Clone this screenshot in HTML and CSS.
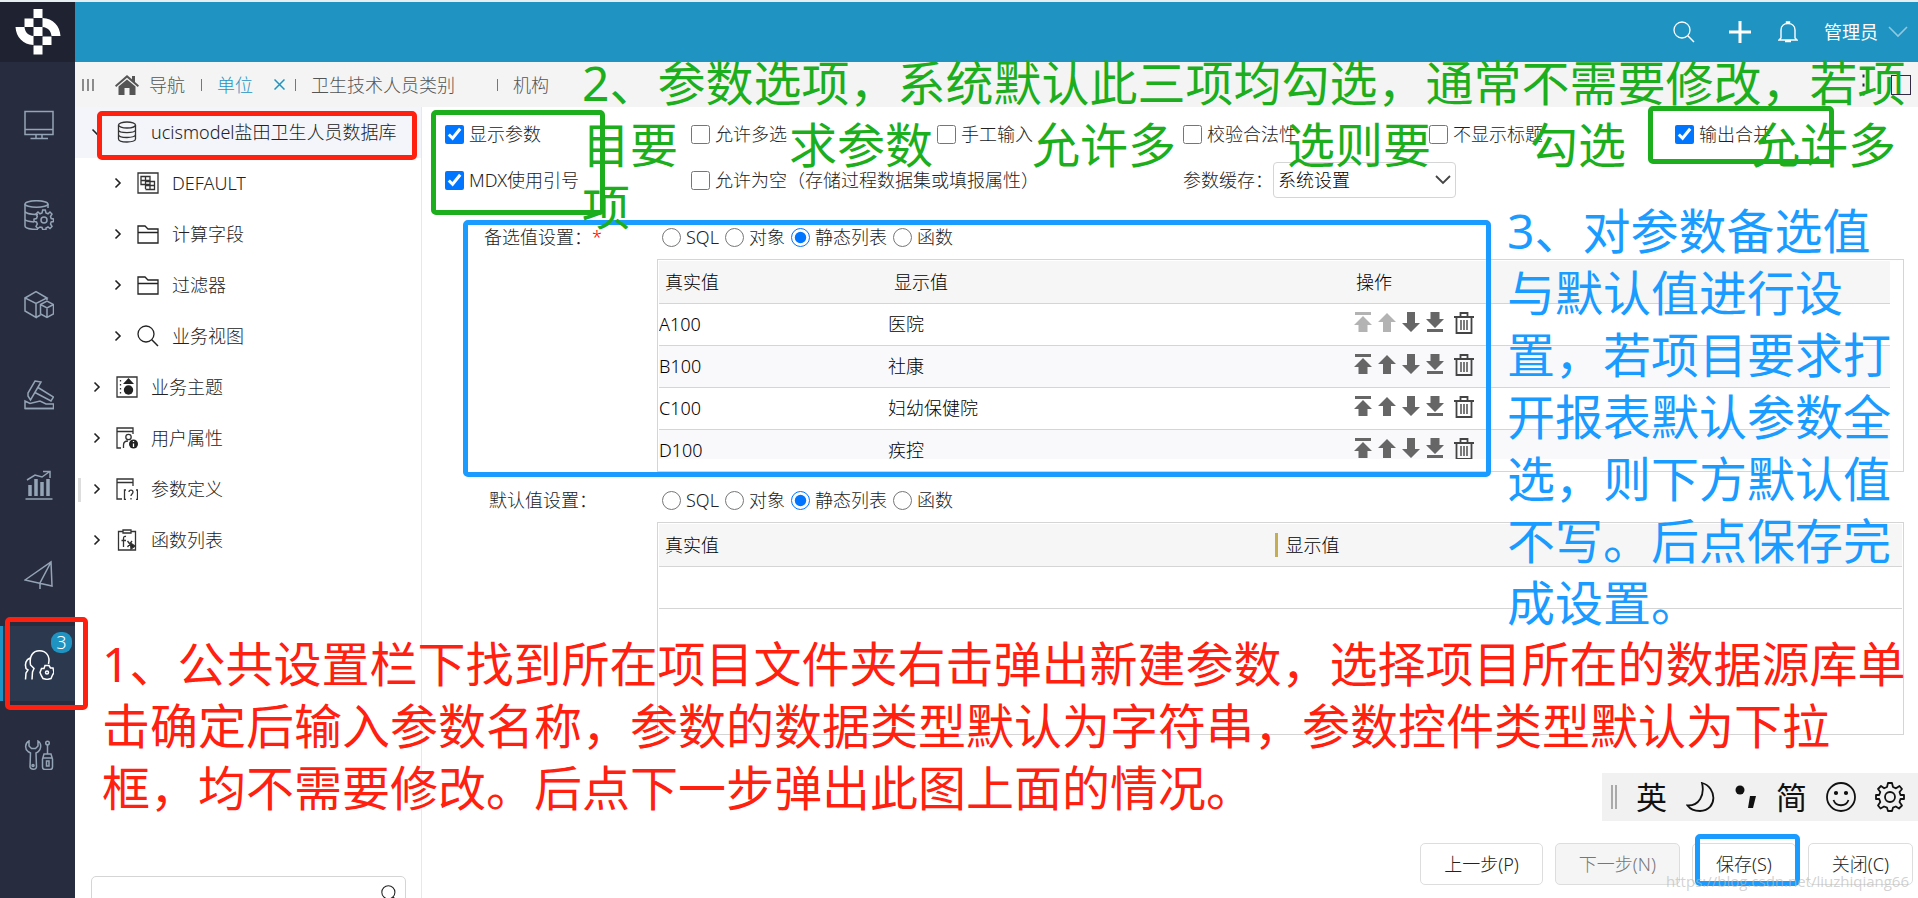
FILE: index.html
```html
<!DOCTYPE html>
<html lang="zh-CN">
<head>
<meta charset="utf-8">
<title>参数定义</title>
<link rel="stylesheet" href="styles.css">
</head>
<body>
<svg class="defs" aria-hidden="true">
  <symbol id="up" viewBox="0 0 20 20"><path d="M10 1L19 10H14V20H6V10H1Z"/></symbol>
  <symbol id="down" viewBox="0 0 20 20"><path d="M10 20L1 11H6V0H14V11H19Z"/></symbol>
  <symbol id="top" viewBox="0 0 20 20"><path d="M2 0H18V3H2ZM10 4L19 13H14.500V20H5.500V13H1Z"/></symbol>
  <symbol id="bottom" viewBox="0 0 20 20"><path d="M2 17H18V20H2ZM10 16L1 7H5.500V0H14.500V7H19Z"/></symbol>
  <symbol id="trash" viewBox="0 0 20 22"><path d="M0 5H20M6.500 4.500V1H13.500V4.500M2.500 5.500V21H17.500V5.500" fill="none" stroke="currentColor" stroke-width="1.800"/><path d="M7 8V18M10 8V18M13 8V18" fill="none" stroke="currentColor" stroke-width="1.400"/></symbol>
  <symbol id="chev" viewBox="0 0 8 12"><path d="M1.500 1.500L6 6L1.500 10.500" fill="none" stroke="currentColor" stroke-width="1.600"/></symbol>
  <symbol id="folder" viewBox="0 0 22 22"><path d="M1 20V3H8L11 6H21V20ZM1 9.500H21" fill="none" stroke="currentColor" stroke-width="1.300"/></symbol>
  <symbol id="search" viewBox="0 0 22 22"><circle cx="9" cy="9" r="8" fill="none" stroke="currentColor" stroke-width="1.300"/><path d="M14.800 14.800L21 21" stroke="currentColor" stroke-width="1.500"/></symbol>
  <symbol id="gear" viewBox="0 0 30 30"><path d="M13 1H17L18 5L21 6.300L24.500 4L27 7L24.500 10L25.500 13H29V17H25.500L24.500 20L27 23.500L24 26.500L20.800 24.500L18 25.700L17 29H13L12 25.700L9 24.500L5.500 26.500L3 23.500L5.300 20L4.200 17H1V13H4.200L5.300 10L3 7L6 4L9.200 6.300L12 5Z" fill="none" stroke="currentColor" stroke-width="1.800" stroke-linejoin="round"/><circle cx="15" cy="15" r="5" fill="none" stroke="currentColor" stroke-width="1.800"/></symbol>
</svg>
<div class="app">
  <nav class="rail">
    <div class="logo">
      <svg width="46" height="46" viewBox="0 0 46 46" fill="#fff"><path d="M18.500 0H27.500V9H18.500ZM9.500 9.500H18.500V18H9.500ZM18.500 18H27.500V27H18.500ZM27.500 27.500H36.500V36H27.500ZM18.500 36.500H27.500V45.500H18.500ZM27.500 9C38 9.500 45 17 45.500 27H36.500C36 22 33 18.500 27.500 18ZM18.500 36C8 35.500 1 28 .5 18H9.500C10 23 13 26.500 18.500 27Z"/></svg>
    </div>
    <a class="rail-item" href="#" aria-label="工作台"><svg viewBox="0 0 30 30"><path d="M1 1.500H29V24.500H1ZM1 19.500H29M12 25V28M18 25V28M6.500 28.500H24"/></svg></a>
    <a class="rail-item" href="#" aria-label="数据源"><svg viewBox="0 0 30 30"><ellipse cx="12.500" cy="4" rx="11.500" ry="3.300"/><path d="M1 4V26C1 28 6 29.500 14 29.500M24 4V8M1 11C1 13 6 14.500 14 14.500M1 19C1 20.500 4 21.500 10 22"/><path d="M18.700 10H21.300L22 13L24 13.800L26 12L28 14L26.500 16.500L27.200 18.500L29.500 19V21.500L27.200 22L26.500 24L28 26.500L26 28.500L24 27L22 28V29.500H18.700L18 27.500L16 27L13.800 28.500L12 26.500L13.300 24L12.500 22L10 21.500V19L12.500 18.500L13.300 16.300L12 14L14 12L16 13.800L18 13Z"/><circle cx="20" cy="20" r="3"/></svg></a>
    <a class="rail-item" href="#" aria-label="数据模型"><svg viewBox="0 0 30 30"><path d="M1 8L12 1.500L23 8L12 13.500ZM1 8V21L12 27.500V13.500M12 27.500L16.500 25M23 8V10"/><path d="M16.500 14.500L23 11L29.500 14.500V24L23 27.500L16.500 24ZM16.500 14.500L23 18L29.500 14.500M23 18V27.500"/></svg></a>
    <a class="rail-item" href="#" aria-label="数据挖掘"><svg viewBox="0 0 30 30"><path d="M11 1L17 2L6.500 20L4 16V13ZM14 7.500L29.500 17L27 21L11 12.500"/><path d="M1 28.500V21L6 23.500L16 21L22 24H29.500V28.500Z"/><path d="M1 28.500H30"/></svg></a>
    <a class="rail-item" href="#" aria-label="分析展现"><svg viewBox="0 0 30 30"><path d="M1.500 29H28.500M3 10L11 5L18 7L25 2M19 1.500H26V8"/><path d="M6 15V26M12 9V26M18 12V26M24 9V26" stroke-width="3.500"/></svg></a>
    <a class="rail-item" href="#" aria-label="数据发布"><svg viewBox="0 0 30 30"><path d="M1 20L27 2L28 26ZM27 2L16 23V29"/></svg></a>
    <a class="rail-item active" href="#" aria-label="公共设置"><svg viewBox="0 0 30 30"><path d="M8 29.500L8.500 22L10 18.500L6.500 15C5 6 9 .8 15.500 .8C22 .8 26.500 6 24.500 14M6 8C2 9.500 .5 14 2 18.500L4 20L2 23L1.500 29.500"/><path d="M21 15.500H25L26.500 18H29L30 22.500L28.500 25L27 28.500L23 29.500L19 28.500L17.500 26L16 22.500L17.500 18.500H20Z"/><circle cx="23" cy="22.500" r="1.500"/></svg><span class="badge">3</span></a>
    <a class="rail-item" href="#" aria-label="系统运维"><svg viewBox="0 0 30 30"><path d="M5 1C1 3 .5 9 4 11.500L6.500 13L6 27C7 30 12 30 12.500 27L12 13C17 11 18.500 4 14 1V6L11.500 8.500H7.500L5 6Z"/><circle cx="9" cy="25.500" r="1"/><circle cx="23.500" cy="3" r="1.800"/><path d="M23.500 5V14M20 14H27L28.500 19V27C28.500 29 27 29.500 26 29.500H21C19 29.500 18.500 28 18.500 27V19ZM18.500 18H28.500M22.500 21H25V26H22.500Z"/></svg></a>
  </nav>

  <div class="main">
    <header class="topbar">
      <button class="ghost" aria-label="搜索"><svg width="22" height="22"><use href="#search"/></svg></button>
      <button class="ghost" aria-label="新建"><svg width="22" height="22" viewBox="0 0 22 22"><path d="M0 11H22M11 0V22" stroke="currentColor" stroke-width="3"/></svg></button>
      <button class="ghost bell" aria-label="通知"><svg width="20" height="22" viewBox="0 0 20 22" fill="none" stroke="currentColor" stroke-width="1.400"><path d="M3 17V9C3 5 6 2.500 10 2.500S17 5 17 9V17L19 19H1ZM7 20.500H13M8.500 2.500V1H11.500V2.500"/></svg></button>
      <button class="ghost user">管理员<svg width="20" height="12" viewBox="0 0 20 12"><path d="M1 1L10 10L19 1" fill="none" stroke="#8fc9e0" stroke-width="1.600"/></svg></button>
    </header>

    <div class="tabs">
      <svg class="grip" width="12" height="12" viewBox="0 0 12 12"><path d="M1 0V12M6 0V12M11 0V12" stroke="#555" stroke-width="1.300"/></svg>
      <a class="tab home" href="#"><svg width="24" height="20" viewBox="0 0 24 20"><path d="M12 0L17 4.300V1H20V7L24 10.500L22.800 12L12 2.800L1.200 12L0 10.500ZM12 4.500L20.500 11.500V20H14.500V13H9.500V20H3.500V11.500Z" fill="#555"/></svg>导航</a>
      <a class="tab current" href="#">单位</a>
      <button class="close" aria-label="关闭标签"><svg width="11" height="11" viewBox="0 0 11 11"><path d="M.5 .5L10.500 10.500M10.500 .5L.5 10.500" stroke="#1f93c1" stroke-width="1.500"/></svg></button>
      <a class="tab cat" href="#">卫生技术人员类别</a>
      <a class="tab org" href="#">机构</a>
      <svg class="tab-tools" width="50" height="22" viewBox="0 0 50 22"><path d="M1.500 2H3.500M1.500 11H3.500M1.500 20H3.500" stroke="#332b45" stroke-width="3"/><rect x="30.500" y="1.500" width="19" height="19" fill="none" stroke="#332b45"/></svg>
    </div>

    <div class="body">
      <aside class="side">
        <ul class="tree">
          <li class="node selected"><svg class="chev open"><use href="#chev"/></svg><svg class="ico" viewBox="0 0 22 22"><ellipse cx="11" cy="4" rx="8.500" ry="3"/><path d="M2.500 4V18C2.500 22 19.500 22 19.500 18V4M2.500 9C2.500 12.500 19.500 12.500 19.500 9M2.500 13.500C2.500 17.500 19.500 17.500 19.500 13.500"/></svg>ucismodel盐田卫生人员数据库</li>
          <li class="node sub"><svg class="chev"><use href="#chev"/></svg><svg class="ico" viewBox="0 0 22 22"><path d="M1 1H21V21H1ZM4 4.500H13V12.500H4ZM8.500 4.500V17M4 8.500H13M8.500 9.500H17.500V17.500H8.500M13 9.500V17.500M8.500 13.500H17.500"/></svg>DEFAULT</li>
          <li class="node sub"><svg class="chev"><use href="#chev"/></svg><svg class="ico"><use href="#folder"/></svg>计算字段</li>
          <li class="node sub"><svg class="chev"><use href="#chev"/></svg><svg class="ico"><use href="#folder"/></svg>过滤器</li>
          <li class="node sub"><svg class="chev"><use href="#chev"/></svg><svg class="ico"><use href="#search"/></svg>业务视图</li>
          <li class="node"><svg class="chev"><use href="#chev"/></svg><svg class="ico" viewBox="0 0 22 22"><path d="M1 1H21V21H1Z"/><path d="M4.500 4V19" stroke-dasharray="1.500 2.500"/><path d="M12.500 2L18 8H7Z" fill="#222" stroke="none"/><circle cx="12.500" cy="14" r="4.700" fill="#222" stroke="none"/></svg>业务主题</li>
          <li class="node"><svg class="chev"><use href="#chev"/></svg><svg class="ico" viewBox="0 0 22 22"><path d="M17 7V1H1V21H5M1 4.500H17M7.500 21V18C7.500 15.500 9.500 14 12 14"/><circle cx="12.500" cy="10" r="2.700"/><circle cx="17.500" cy="17" r="4.500" fill="#222" stroke="none"/><path d="M17.500 14V15M17.500 16.500V20" stroke="#fff"/></svg>用户属性</li>
          <li class="node"><svg class="chev"><use href="#chev"/></svg><svg class="ico" viewBox="0 0 22 22"><path d="M17 8V1H1V21H6M1 4.500H17M10 12H8.500V21.500H10M20 12H21.500V21.500H20M13 14C13 11.500 17 11.500 17 14C17 16 15 16 15 18M15 20V21.500"/></svg>参数定义</li>
          <li class="node"><svg class="chev"><use href="#chev"/></svg><svg class="ico" viewBox="0 0 22 22"><path d="M7 2.500H2.500V21H19.500V2.500H15M7 1H15V4H7ZM10 7.500C7.500 7 7.500 8.500 7.500 10V18M5.500 11.500H10M11.500 12L16 18M16 12L11.500 18"/><path d="M14.500 14L19 17L15 20Z" fill="#222"/></svg>函数列表</li>
        </ul>
        <div class="side-search">
          <input type="text" aria-label="搜索资源">
          <svg width="18" height="18"><use href="#search"/></svg>
        </div>
        <span class="splitter"></span>
      </aside>

      <main class="form">
        <div class="options">
          <label><input type="checkbox" checked>显示参数</label>
          <label><input type="checkbox">允许多选</label>
          <label><input type="checkbox">手工输入</label>
          <label><input type="checkbox">校验合法性</label>
          <label><input type="checkbox">不显示标题</label>
          <label><input type="checkbox" checked>输出合并</label>
          <label><input type="checkbox" checked>MDX使用引号</label>
          <label class="two"><input type="checkbox">允许为空（存储过程数据集或填报属性）</label>
          <div class="cache"><label for="cache">参数缓存：</label><span class="select"><select id="cache"><option>系统设置</option></select><svg width="16" height="10" viewBox="0 0 16 10"><path d="M1 1L8 8L15 1" fill="none" stroke="#444" stroke-width="1.800"/></svg></span></div>
        </div>

        <section class="field">
          <div class="name">备选值设置：<span class="must">*</span></div>
          <div class="value">
            <div class="radios">
              <label><input type="radio" name="a">SQL</label><label><input type="radio" name="a">对象</label><label><input type="radio" name="a" checked>静态列表</label><label><input type="radio" name="a">函数</label>
            </div>
            <div class="box scroll">
              <table class="grid">
                <colgroup><col class="c1"><col class="c2"><col></colgroup>
                <thead><tr><th>真实值</th><th>显示值</th><th>操作</th></tr></thead>
                <tbody>
                  <tr><td>A100</td><td>医院</td><td><div class="acts"><button disabled aria-label="置顶"><svg><use href="#top"/></svg></button><button disabled aria-label="上移"><svg><use href="#up"/></svg></button><button aria-label="下移"><svg><use href="#down"/></svg></button><button aria-label="置底"><svg><use href="#bottom"/></svg></button><button class="del" aria-label="删除"><svg><use href="#trash"/></svg></button></div></td></tr>
                  <tr><td>B100</td><td>社康</td><td><div class="acts"><button aria-label="置顶"><svg><use href="#top"/></svg></button><button aria-label="上移"><svg><use href="#up"/></svg></button><button aria-label="下移"><svg><use href="#down"/></svg></button><button aria-label="置底"><svg><use href="#bottom"/></svg></button><button class="del" aria-label="删除"><svg><use href="#trash"/></svg></button></div></td></tr>
                  <tr><td>C100</td><td>妇幼保健院</td><td><div class="acts"><button aria-label="置顶"><svg><use href="#top"/></svg></button><button aria-label="上移"><svg><use href="#up"/></svg></button><button aria-label="下移"><svg><use href="#down"/></svg></button><button aria-label="置底"><svg><use href="#bottom"/></svg></button><button class="del" aria-label="删除"><svg><use href="#trash"/></svg></button></div></td></tr>
                  <tr><td>D100</td><td>疾控</td><td><div class="acts"><button aria-label="置顶"><svg><use href="#top"/></svg></button><button aria-label="上移"><svg><use href="#up"/></svg></button><button aria-label="下移"><svg><use href="#down"/></svg></button><button aria-label="置底"><svg><use href="#bottom"/></svg></button><button class="del" aria-label="删除"><svg><use href="#trash"/></svg></button></div></td></tr>
                </tbody>
              </table>
            </div>
          </div>
        </section>

        <section class="field second">
          <div class="name">默认值设置：</div>
          <div class="value">
            <div class="radios">
              <label><input type="radio" name="b">SQL</label><label><input type="radio" name="b">对象</label><label><input type="radio" name="b" checked>静态列表</label><label><input type="radio" name="b">函数</label>
            </div>
            <div class="box">
              <table class="grid">
                <thead><tr><th>真实值</th><th><span class="gold">显示值</span></th></tr></thead>
                <tbody><tr><td></td><td></td></tr></tbody>
              </table>
            </div>
          </div>
        </section>

        <footer class="foot">
          <button>上一步(P)</button>
          <button disabled>下一步(N)</button>
          <button class="save">保存(S)</button>
          <button>关闭(C)</button>
        </footer>
      </main>
    </div>
  </div>

  <div class="frame red f-db"></div>
  <div class="frame red f-rail"></div>
  <div class="frame green f-checks"></div>
  <div class="frame green f-merge"></div>
  <div class="frame blue f-table"></div>
  <div class="frame blue f-save"></div>

  <div class="note n2">
    <div class="first">2、参数选项，系统默认此三项均勾选，通常不需要修改，若项</div>
    <div class="spread"><span>目要</span><span>求参数</span><span>允许多</span><span>选则要</span><span>勾选</span><span>允许多</span></div>
    <div>项</div>
  </div>
  <div class="note n3">3、对参数备选值<br>与默认值进行设<br>置，若项目要求打<br>开报表默认参数全<br>选，则下方默认值<br>不写。后点保存完<br>成设置。</div>
  <div class="note n1">1、公共设置栏下找到所在项目文件夹右击弹出新建参数，选择项目所在的数据源库单<br>击确定后输入参数名称，参数的数据类型默认为字符串，参数控件类型默认为下拉<br>框，均不需要修改。后点下一步弹出此图上面的情况。</div>

  <div class="ime">
    <span class="ime-grip"></span>
    <span>英</span>
    <svg width="30" height="30" viewBox="0 0 30 30"><path d="M16 1C31 5 32 28 14 29C8 29 4 27 1.500 23.500C13 24 19 13 16 1Z"/></svg>
    <svg width="22" height="26" viewBox="0 0 22 26"><circle cx="5" cy="6" r="4.500" fill="#111" stroke="none"/><path d="M15 12H21L18 24H13Z" fill="#111" stroke="none"/></svg>
    <span>简</span>
    <svg width="30" height="30" viewBox="0 0 30 30"><circle cx="15" cy="15" r="14"/><circle cx="10" cy="11" r="1.200" fill="#111"/><circle cx="20" cy="11" r="1.200" fill="#111"/><path d="M7.500 18C10 25 20 25 22.500 18"/></svg>
    <svg width="30" height="30"><use href="#gear"/></svg>
  </div>
  <div class="mark">https://blog.csdn.net/liuzhiqiang66</div>
</div>
</body>
</html>
```
FILE: styles.css
```css
* { box-sizing: border-box; }
body {
  margin: 0;
  font: 300 18px/24px "Noto Sans", "Noto Sans CJK SC", sans-serif;
  color: #222;
  background: #fff;
}
button, input, select { font: inherit; color: inherit; margin: 0; }
button { cursor: pointer; }
a { color: inherit; text-decoration: none; }
.defs { display: none; }

.app {
  position: relative;
  display: flex;
  height: 100vh;
  overflow: hidden;
  border-top: 2px solid #e6eef2;
}

/* icon rail */
.rail { width: 75px; flex: none; background: #282c3f; }
.logo {
  height: 60px;
  margin-bottom: 24px;
  background: #1f2230;
  display: flex;
  align-items: center;
  justify-content: center;
}
.rail-item {
  position: relative;
  display: flex;
  align-items: center;
  justify-content: center;
  height: 75px;
  margin-bottom: 15px;
  padding: 3px 0 0 3px;
  color: #93a4b6;
}
.rail-item svg { width: 30px; height: 30px; fill: none; stroke: currentColor; stroke-width: 1.5; }
.rail-item.active { background: #2b384e; color: #fff; box-shadow: inset 3px 0 #1f93c1; }
.badge {
  position: absolute;
  top: 6px;
  right: 3px;
  width: 21px;
  height: 21px;
  border-radius: 9px;
  background: #1f93c1;
  color: #fff;
  line-height: 20px;
  text-align: center;
}

.main { flex: 1; min-width: 0; display: flex; flex-direction: column; }

.topbar {
  height: 60px;
  flex: none;
  display: flex;
  align-items: center;
  justify-content: flex-end;
  padding-right: 10px;
  background: #1f93c1;
  color: #fff;
}
.ghost { display: flex; align-items: center; padding: 0; border: 0; background: none; color: #fff; margin-left: 34px; }
.ghost.bell { margin-left: 27px; }
.ghost.user { gap: 10px; margin-left: 26px; font-weight: 400; }

.tabs {
  height: 45px;
  flex: none;
  display: flex;
  align-items: center;
  padding: 0 7px;
  background: #f4f4f4;
  color: #555;
}
.grip { margin-right: 21px; }
.tab { display: flex; align-items: center; position: relative; }
.home { gap: 10px; margin-right: 32px; }
.current { color: #1f93c1; margin-right: 21px; }
.close { display: flex; padding: 0; border: 0; background: none; margin-right: 26px; }
.cat { margin-right: 58px; }
.current::before, .cat::before, .org::before {
  content: "";
  position: absolute;
  left: -16px;
  width: 1px;
  height: 12px;
  background: #777;
}
.tab-tools { margin-left: auto; }

.body { flex: 1; min-height: 0; display: flex; }
.side {
  position: relative;
  width: 347px;
  flex: none;
  display: flex;
  flex-direction: column;
  border-right: 1px solid #e8e8ec;
}
.tree { list-style: none; margin: 0; padding: 0; }
.node { display: flex; align-items: center; height: 51px; padding: 0 0 2px 18px; }
.node.sub { padding-left: 39px; }
.node.selected { background: #f3f5fa; }
.chev { width: 8px; height: 12px; margin-right: 15px; }
.chev.open { transform: rotate(90deg); }
.ico { width: 22px; height: 22px; margin-right: 13px; fill: none; stroke: #333; stroke-width: 1.3; }
.side-search { position: relative; margin: auto 15px -16px 16px; }
.side-search input { width: 100%; height: 38px; border: 1px solid #d5d5d5; border-radius: 5px; display: block; }
.side-search svg { position: absolute; right: 7px; top: 9px; }
.splitter { position: absolute; left: 3px; top: 371px; width: 3px; height: 24px; background: #ddd; }

.form { flex: 1; min-width: 0; display: flex; flex-direction: column; padding-top: 4px; }
.options {
  display: grid;
  grid-template-columns: repeat(6, 1fr);
  grid-auto-rows: 46px;
  align-items: center;
  padding-left: 23px;
  margin-right: -3px;
}
.options label, .radios label { display: flex; align-items: center; gap: 5px; white-space: nowrap; }
.two { grid-column: span 2; }
input[type="checkbox"], input[type="radio"] { width: 19px; height: 19px; flex: none; }
.cache { grid-column: span 2; display: flex; align-items: center; }
.select { position: relative; display: flex; align-items: center; }
.select select {
  appearance: none;
  width: 183px;
  height: 36px;
  padding: 0 4px;
  border: 1px solid #d5d5d5;
  border-radius: 4px;
  background: #fff;
  color: #000;
}
.select svg { position: absolute; right: 5px; pointer-events: none; }

.field { display: grid; grid-template-columns: 228px 1fr; padding: 0 14px 0 7px; margin-top: 12px; }
.field.second { margin-top: 6px; }
.name { height: 44px; line-height: 44px; text-align: center; }
.must { color: #f00; }
.radios { display: flex; align-items: center; height: 44px; gap: 6px; padding-left: 5px; }
.box { height: 213px; padding: 1px; border: 1px solid #d5d5d5; overflow: hidden; color: #000; }
.box.scroll {
  display: flex;
  align-items: flex-start;
  padding: 1px 13px 12px 1px;
  overflow: clip;
  overflow-clip-margin: content-box;
}
.grid { width: 100%; table-layout: fixed; border-collapse: separate; border-spacing: 0; }
.c1 { width: 229px; }
.c2 { width: 462px; }
.grid th, .grid td { border-bottom: 1px solid #d5d5d5; padding: 0; text-align: left; }
.grid th { height: 43px; padding-left: 6px; font-weight: 300; background: #f6f6f6; }
.grid td { height: 42px; padding-bottom: 2px; }
.grid tbody tr:nth-child(even) { background: #f9f9fc; }
.gold { display: block; line-height: 24px; margin-left: -12px; border-left: 3px solid #c4ad52; padding-left: 8px; }
.acts { display: flex; align-items: flex-start; gap: 4px; padding: 0 0 1px 3px; }
.acts button { display: flex; padding: 0; border: 0; background: none; color: #666; }
.acts svg { width: 20px; height: 20px; fill: currentColor; }
.acts button:disabled { color: #b3b3b3; }
.acts .del { margin-left: 5px; color: #444; }
.acts .del svg { height: 22px; }

.foot { display: flex; justify-content: flex-end; gap: 12px; margin-top: auto; padding: 0 5px 13px; }
.foot button { height: 42px; padding: 0 23px; border: 1px solid #ddd; border-radius: 5px; background: #fff; }
.foot button:disabled { background: #f5f5f5; color: #777; }

/* annotations over the page */
.frame { position: absolute; border: 5px solid; border-radius: 5px; pointer-events: none; }
.red { border-color: #ff2010; }
.green { border-color: #1cae1c; }
.blue { border-color: #1a9bff; }
.f-db { left: 97px; top: 109px; width: 320px; height: 49px; }
.f-rail { left: 5px; top: 615px; width: 83px; height: 93px; }
.f-checks { left: 431px; top: 108px; width: 174px; height: 105px; }
.f-merge { left: 1648px; top: 104px; width: 186px; height: 58px; }
.f-table { left: 463px; top: 218px; width: 1028px; height: 257px; }
.f-save { left: 1695px; top: 832px; width: 105px; height: 52px; }

.note {
  position: absolute;
  font-size: 48px;
  font-weight: 400;
  line-height: 62px;
  white-space: nowrap;
  pointer-events: none;
}
.n1 { left: 102px; top: 631px; color: #ff2010; }
.n2 { left: 582px; top: 50px; color: #1cae1c; }
.n3 { left: 1507px; top: 198px; color: #1a9bff; }
.spread { display: flex; }
.spread span { margin-right: 99px; }
.spread span:nth-child(1), .spread span:nth-child(3) { margin-right: 111px; }
.spread span:nth-child(5) { margin-right: 126px; }

.ime {
  position: absolute;
  right: 0;
  top: 771px;
  height: 48px;
  width: 316px;
  display: flex;
  align-items: center;
  justify-content: space-between;
  padding: 0 13px 0 9px;
  background: #f1f1f1;
  color: #111;
  font-size: 31px;
  font-weight: 400;
}
.ime svg { fill: none; stroke: #111; stroke-width: 1.8; }
.ime-grip { width: 6px; height: 24px; border: 2px solid #aaa; border-width: 0 2px; }
.mark { position: absolute; right: 9px; bottom: 7px; font: 400 15px/20px "Open Sans", sans-serif; color: rgba(185, 185, 185, .65); }
```
